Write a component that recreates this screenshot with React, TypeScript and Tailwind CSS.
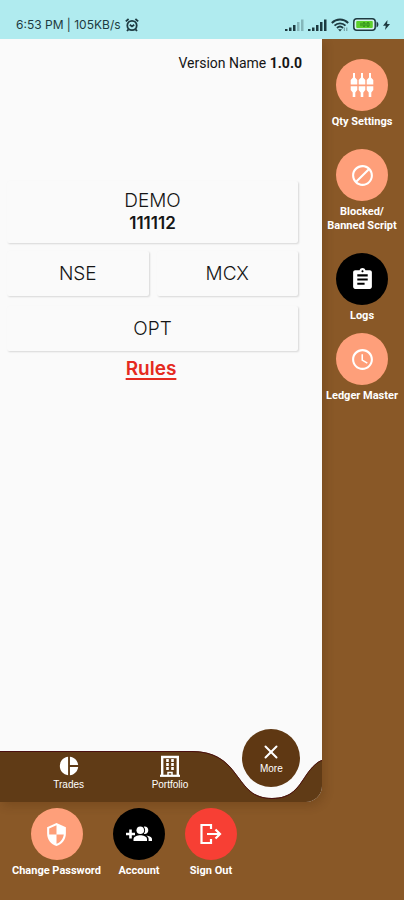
import type { ReactNode } from "react";
import { X } from "lucide-react";
import { MdAccessTime, MdAssignment, MdBlock, MdPieChart, MdSecurity } from "react-icons/md";

interface RoundActionProps {
  label: ReactNode;
  color: string;
  className?: string;
  children: ReactNode;
}

function RoundAction({ label, color, className = "", children }: RoundActionProps) {
  return (
    <button className={`flex flex-col items-center gap-1 ${className}`}>
      <span className={`flex size-[52px] items-center justify-center rounded-full ${color}`}>
        {children}
      </span>
      <span className="whitespace-nowrap text-center font-[Roboto,sans-serif] text-[11px] leading-[14px] font-bold">
        {label}
      </span>
    </button>
  );
}

function PlugsIcon() {
  return (
    <svg viewBox="0 0 24 24" className="size-6" fill="currentColor">
      <path d="M3 0H5V4.5L7.3 7V11.5H0.7V7L3 4.5ZM11 0H13V4.5L15.3 7V11.5H8.7V7L11 4.5ZM19 0H21V4.5L23.3 7V11.5H16.7V7L19 4.5Z" />
      <path d="M0.7 13.3H7.3V17L5.3 19.5V24H2.7V19.5L0.7 17ZM8.7 13.3H15.3V17L13.3 19.5V24H10.7V19.5L8.7 17ZM16.7 13.3H23.3V17L21.3 19.5V24H18.7V19.5L16.7 17Z" />
    </svg>
  );
}

function AddGroupIcon() {
  return (
    <svg viewBox="0 0 26 16" className="h-4 w-[26px]" fill="currentColor">
      <path d="M3.2 3.5H5.8V6.7H9V9.3H5.8V12.5H3.2V9.3H0V6.7H3.2Z" />
      <circle cx="14.3" cy="4.3" r="3.8" />
      <path d="M7.5 15V13C7.5 10.4 11.5 9.2 14.3 9.2S21 10.4 21 13V15Z" />
      <path d="M17.8 0.7C20.2 0 22.3 1.8 22.3 4.3S20.2 8.5 17.8 7.9C19.6 5.8 19.6 2.8 17.8 0.7Z" />
      <path d="M20.3 9.5C23 9.9 26 11 26 13V15H22.6V13C22.6 11.6 21.6 10.4 20.3 9.5Z" />
    </svg>
  );
}

function BuildingIcon() {
  return (
    <svg viewBox="0 0 22 22" className="size-[22px]" fill="none" stroke="currentColor">
      <path d="M3.2 21V2H18.8V21" strokeWidth="2.4" />
      <path d="M1 20.8H21" strokeWidth="2.2" />
      <path d="M8.5 4V16M13.5 4V16" strokeWidth="2.6" strokeDasharray="3 1" />
      <path d="M9 21V17.5H13V21" strokeWidth="1.5" />
    </svg>
  );
}

function SignalBars({ weak = false }: { weak?: boolean }) {
  return (
    <svg viewBox="0 0 19 12" className="h-3 w-[19px]" fill="currentColor">
      <rect x="0" y="10" width="2.5" height="2" />
      <rect x="4" y="8.5" width="2.5" height="3.5" />
      <rect x="8" y="6" width="2.5" height="6" />
      <rect x="12" y="3" width="2.5" height="9" opacity={weak ? 0.3 : 1} />
      <rect x="16" y="0.5" width="2.5" height="11.5" opacity={weak ? 0.3 : 1} />
    </svg>
  );
}

function StatusBar() {
  return (
    <header className="relative z-10 flex h-[39px] items-center justify-between bg-[#b0ebef] pt-2.5 pr-3.5 pl-4 text-[#1d3a40]">
      <div className="flex items-center gap-1 text-[12px] leading-4">
        <span>6:53 PM | 105KB/s</span>
        <svg viewBox="0 0 14 14" className="size-3.5" fill="none" stroke="currentColor" strokeWidth="1.8">
          <circle cx="7" cy="7.5" r="4.7" />
          <path d="M0.8 3.4 3.6 1M13.2 3.4 10.4 1M3.5 11.3 2 13M10.5 11.3 12 13M4.8 6.8 7 8.4 9.2 6.8" />
        </svg>
      </div>
      <div className="flex items-center gap-1">
        <SignalBars weak />
        <SignalBars />
        <svg viewBox="0 0 18 14" className="h-3.5 w-[18px]" fill="none" stroke="currentColor" strokeWidth="1.9">
          <path d="M0.8 5C5.5 0.4 12.5 0.4 17.2 5M3.5 7.6C6.6 4.6 11.4 4.6 14.5 7.6M6 10C7.8 8.3 10.2 8.3 12 10" />
          <path d="M7 11.2 9 13.4 11 11.2Z" fill="currentColor" stroke="none" />
          <path d="M13.3 9.5V13M15.8 9.5V13" strokeWidth="1" opacity="0.5" />
        </svg>
        <svg viewBox="0 0 26 13" className="h-[13px] w-[26px]" fill="none">
          <rect x="0.8" y="0.8" width="21.4" height="11.4" rx="3" fill="#d5f3ee" stroke="currentColor" strokeWidth="1.5" />
          <path d="M23.5 3.5C26 4.5 26 8.5 23.5 9.5Z" fill="currentColor" />
          <rect x="3.2" y="3" width="16.6" height="7" rx="1" fill="#5ed02c" />
          <path d="M8 4.8V8.2M10 4.8H12V8.2H10ZM14 4.8H16V8.2H14Z" stroke="#28841a" />
        </svg>
        <svg viewBox="0 0 7 10" className="h-2.5 w-[7px]" fill="currentColor">
          <path d="M4.5 0 0 5.8H2.8L2 10 7 3.9H4.1Z" />
        </svg>
      </div>
    </header>
  );
}

function Card({ className = "", children }: { className?: string; children: ReactNode }) {
  return (
    <div
      className={`flex flex-col items-center justify-center rounded-xs bg-[#fafafa] text-[19px] leading-[22px] font-light shadow-[1px_1px_2px_rgba(0,0,0,0.14)] ${className}`}
    >
      {children}
    </div>
  );
}

function BottomNav() {
  return (
    <nav className="relative h-[51px] font-['Liberation_Sans',sans-serif] text-[10px] leading-3 text-white">
      {/* bar with the dip around the More button */}
      <div className="absolute inset-0 flex">
        <div className="flex-1 border-t border-[#4b1010] bg-[#603b16]" />
        <svg viewBox="0 0 130 51" className="h-[51px] w-[130px]">
          <path
            d="M0 0C22 0 34 9 44 23C54 36 60 47 80 47C100 47 106 36 114 24C120 15 126 10 130 9V51H0Z"
            fill="#603b16"
          />
          <path
            d="M0 0.5C22 0.5 34 9.5 44 23.5C54 36.5 60 47.5 80 47.5C100 47.5 106 36.5 114 24.5C120 15.5 126 10.5 130 9.5"
            fill="none"
            stroke="#4b1010"
            strokeWidth="1"
          />
        </svg>
      </div>
      <div className="relative grid grid-cols-3 items-start pl-[18px]">
        <button className="flex flex-col items-center gap-0.5 pt-1">
          <MdPieChart size={22} />
          <span>Trades</span>
        </button>
        <button className="flex flex-col items-center gap-0.5 pt-1">
          <BuildingIcon />
          <span>Portfolio</span>
        </button>
        <button className="-mt-[22px] flex size-[58px] flex-col items-center justify-center justify-self-center rounded-full bg-[#5f3813]">
          <X size={22} strokeWidth={2.2} />
          <span>More</span>
        </button>
      </div>
    </nav>
  );
}

export default function App() {
  return (
    <div className="flex min-h-screen flex-col bg-[#895827] font-[Inter,sans-serif] text-white">
      <StatusBar />

      <div className="flex flex-1">
        <main className="flex flex-1 flex-col overflow-hidden rounded-br-2xl bg-[#fafafa] text-[#151515] shadow-[3px_4px_10px_rgba(60,30,0,0.2)]">
          <p className="pt-3.5 pr-5 text-right font-[Roboto,sans-serif] text-[14px] leading-5">
            Version Name <b>1.0.0</b>
          </p>

          <div className="flex flex-col gap-2 pt-[108px] pr-6 pl-[7px]">
            <Card className="h-[62px]">
              <span>DEMO</span>
              <b className="text-[17px] font-semibold">111112</b>
            </Card>
            <div className="grid grid-cols-2 gap-2">
              <Card className="h-[45px]">NSE</Card>
              <Card className="h-[45px]">MCX</Card>
            </div>
            <Card className="mt-0.5 h-[45px]">OPT</Card>
          </div>
          <a
            href="#rules"
            className="mt-1.5 mr-5 self-center text-[19px] leading-6 font-semibold text-[#e52a20] underline decoration-2 underline-offset-3"
          >
            Rules
          </a>

          <div className="mt-auto">
            <BottomNav />
          </div>
        </main>

        <aside className="flex w-[82px] flex-col items-center pt-5 pr-0.5">
          <RoundAction label="Qty Settings" color="bg-[#fe9f7a]">
            <PlugsIcon />
          </RoundAction>
          <RoundAction
            label={
              <>
                Blocked/
                <br />
                Banned Script
              </>
            }
            color="bg-[#fe9f7a]"
            className="mt-5"
          >
            <MdBlock size={25} />
          </RoundAction>
          <RoundAction label="Logs" color="bg-black" className="mt-5">
            <MdAssignment size={25} />
          </RoundAction>
          <RoundAction label="Ledger Master" color="bg-[#fe9f7a]" className="mt-2.5">
            <MdAccessTime size={25} />
          </RoundAction>
        </aside>
      </div>

      <footer className="flex h-[98px] items-start pt-1.5 pl-3">
        <RoundAction label="Change Password" color="bg-[#fe9f7a]">
          <MdSecurity size={25} />
        </RoundAction>
        <RoundAction label="Account" color="bg-black" className="ml-3">
          <AddGroupIcon />
        </RoundAction>
        <RoundAction label="Sign Out" color="bg-[#f73f34]" className="ml-5">
          <svg viewBox="0 0 24 24" className="size-6" fill="none" stroke="currentColor" strokeWidth="2.2">
            <path d="M12 7V3H2.5V21H12V17M8 12H21M16.5 7.5 21 12 16.5 16.5" />
          </svg>
        </RoundAction>
      </footer>
    </div>
  );
}
